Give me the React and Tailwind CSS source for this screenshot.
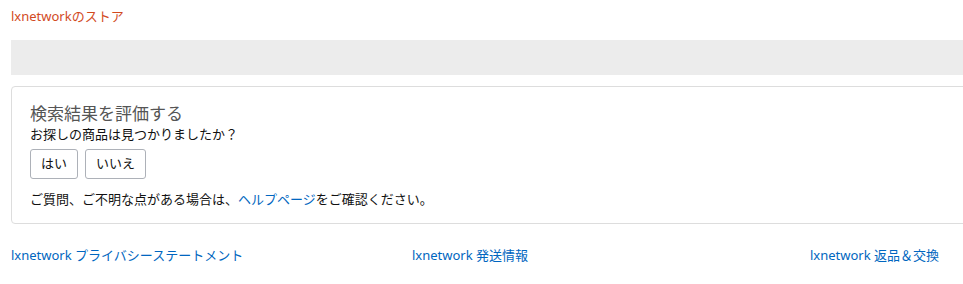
export default function App() {
  const font = { fontFamily: '"Noto Sans", "Noto Sans CJK JP", sans-serif' };
  return (
    <div className="w-[963px] h-[284px] overflow-hidden bg-white" style={font}>
      <div className="w-[1200px] pl-[11px]">
        <div className="pt-[8px] h-[40px] text-[13px] leading-[17px] text-[#d24a1e]">lxnetworkのストア</div>
        <div className="h-[35px] bg-[#ececec]"></div>
        <div className="mt-[11px] h-[138px] border border-[#dddddd] rounded-[4px] pl-[18px] pt-[15px]">
          <div className="text-[17px] leading-[24px] text-[#555555]">検索結果を評価する</div>
          <div className="text-[13px] leading-[19px] text-[#111111] mt-[-1px]">お探しの商品は見つかりましたか？</div>
          <div className="flex gap-[7px] mt-[5px]">
            <button className="w-[48px] h-[30px] border border-[#adb1b8] rounded-[3px] bg-white text-[13px] text-[#111111]">はい</button>
            <button className="w-[61px] h-[30px] border border-[#adb1b8] rounded-[3px] bg-white text-[13px] text-[#111111]">いいえ</button>
          </div>
          <div className="mt-[11px] text-[13px] leading-[19px] text-[#111111]">
            ご質問、ご不明な点がある場合は、<span className="text-[#0066c0]">ヘルプページ</span>をご確認ください。
          </div>
        </div>
        <div className="flex mt-[22px] text-[13px] leading-[19px] text-[#0066c0]">
          <div className="w-[401px]">lxnetwork プライバシーステートメント</div>
          <div className="w-[398px]">lxnetwork 発送情報</div>
          <div>lxnetwork 返品＆交換</div>
        </div>
      </div>
    </div>
  );
}
